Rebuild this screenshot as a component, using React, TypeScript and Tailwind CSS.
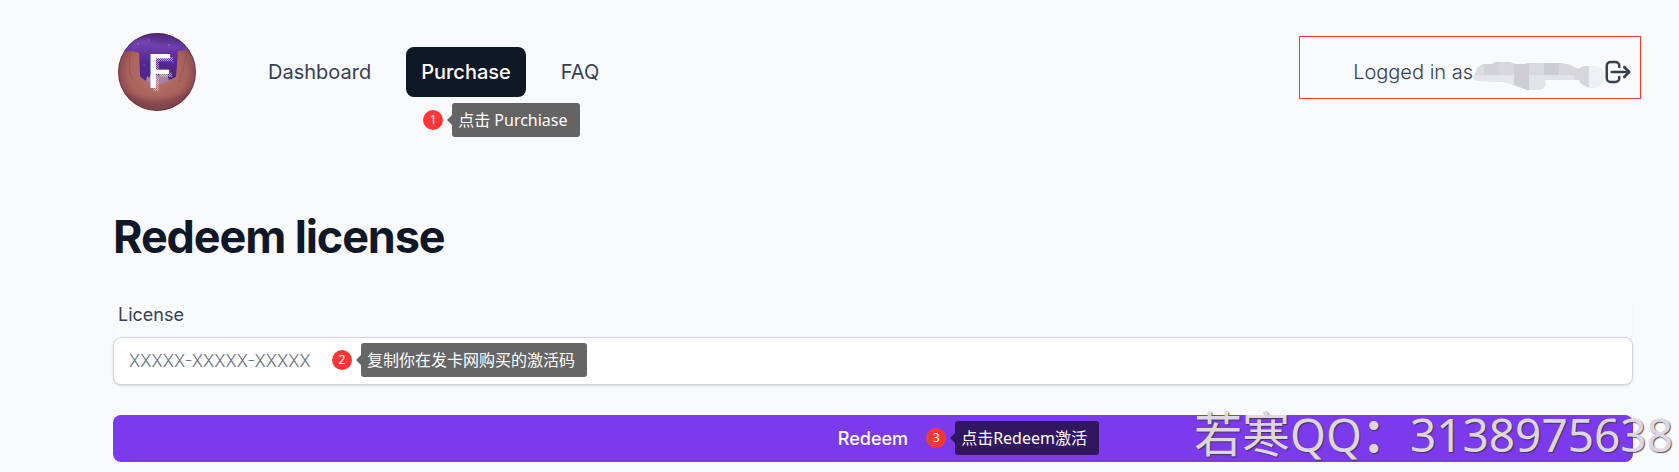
import React from "react";

const CJK = "font-['Noto_Sans','Noto_Sans_CJK_SC',sans-serif]";

function Note({ step, text, className }: { step: number; text: string; className: string }) {
  return (
    <span className={`pointer-events-none absolute flex items-center font-normal ${className}`}>
      <span className="flex size-5 items-center justify-center rounded-full bg-[#ff3636] font-['Noto_Sans',sans-serif] text-xs text-white">
        {step}
      </span>
      <span className="ml-1 h-0 w-0 border-y-[5px] border-r-[5px] border-y-transparent border-r-black/60" />
      <span className={`h-[34px] whitespace-nowrap rounded-[3px] bg-black/60 pl-1.5 pr-3 text-base leading-[34px] text-white ${CJK}`}>
        {text}
      </span>
    </span>
  );
}

function Logo() {
  return (
    <svg viewBox="0 0 78 78" className="size-[78px]" role="img" aria-label="Logo">
      <defs>
        <clipPath id="disc">
          <circle cx="39" cy="39" r="39" />
        </clipPath>
        <radialGradient id="skin" cx="0.5" cy="0.5" r="0.58">
          <stop offset="0" stopColor="#b97868" />
          <stop offset="0.65" stopColor="#a8625d" />
          <stop offset="0.85" stopColor="#8c4b50" />
          <stop offset="1" stopColor="#4f2832" />
        </radialGradient>
        <linearGradient id="sky" x1="0" y1="0" x2="0" y2="1">
          <stop offset="0" stopColor="#4f2a80" />
          <stop offset="0.3" stopColor="#6b3aa8" />
          <stop offset="0.6" stopColor="#54288f" />
          <stop offset="1" stopColor="#4a2484" />
        </linearGradient>
        <filter id="haze" x="-20%" y="-20%" width="140%" height="140%">
          <feGaussianBlur stdDeviation="2" />
        </filter>
        <pattern id="dots" width="2" height="2" patternUnits="userSpaceOnUse">
          <rect width="1" height="1" fill="#d6c9e0" fillOpacity="0.8" />
          <rect x="1" y="1" width="1" height="1" fill="#d6c9e0" fillOpacity="0.8" />
        </pattern>
      </defs>
      <g clipPath="url(#disc)">
        <rect width="78" height="78" fill="url(#skin)" />
        <path d="M0 58Q38 76 78 56V78H0Z" fill="#6b3540" opacity="0.45" filter="url(#haze)" />
        <path d="M0 0H78V20L68 17L60 18L59 32L58 44Q50 48 42 50L33 50Q26 48 22 43L21 20L15 18L0 19Z" fill="url(#sky)" />
        <path d="M14 9Q26 3 36 9T64 12Q54 18 42 14T14 14Z" fill="#8a54c2" opacity="0.6" filter="url(#haze)" />
        <path d="M28 48L29 43L31 45L33 41L35 45L39 42L41 44L43 38L45 36L46 41L49 40L51 48L43 51L34 51Z" fill="#a7849b" />
        <path d="M13 20Q9 34 14 46M68 22Q66 36 61 49" fill="none" stroke="#773f46" strokeWidth="1" opacity="0.4" />
        <g fill="#aa8cd5">
          <circle cx="20" cy="11" r="0.7" />
          <circle cx="27" cy="18" r="0.6" />
          <circle cx="31" cy="7" r="0.6" />
          <circle cx="51" cy="12" r="0.7" />
          <circle cx="55" cy="29" r="0.6" />
          <circle cx="26" cy="32" r="0.6" />
        </g>
        <g fontFamily="'Noto Sans',sans-serif" fontWeight="500" fontSize="48">
          <text x="31" y="58" fill="url(#dots)">F</text>
          <text x="28" y="55" fill="#ffffff">F</text>
        </g>
        <circle cx="39" cy="39" r="38.5" fill="none" stroke="#3c2036" strokeWidth="1" opacity="0.4" />
      </g>
    </svg>
  );
}

function HiddenName() {
  return (
    <svg viewBox="0 -6 132 36" className="h-9 w-[132px]" aria-hidden="true">
      <defs>
        <clipPath id="smudge">
          <path d="M0 16Q3 14 4 8L10 4H19L22 2H36L43 4H52L55 3H88L97 5L105 9L111 6H122L130 9L131 18Q128 28 118 28Q108 26 106 20L98 20H72L73 25Q71 30 64 30H54L41 25L30 22L5 21Q0 20 0 16Z" />
        </clipPath>
      </defs>
      <g clipPath="url(#smudge)" shapeRendering="crispEdges">
        <rect width="132" height="30" fill="#e2e3e7" />
        <rect width="11" height="15" fill="#dcdde1" />
        <rect x="11" width="15" height="15" fill="#d2d2d7" />
        <rect x="26" width="15" height="15" fill="#d7d7dc" />
        <rect x="41" width="15" height="30" fill="#cecdd4" />
        <rect x="56" width="15" height="15" fill="#d9dade" />
        <rect x="71" width="15" height="15" fill="#cccdd1" />
        <rect x="86" width="15" height="15" fill="#d7d7dc" />
        <rect y="15" width="41" height="15" fill="#e5e6ea" />
        <rect x="56" y="15" width="15" height="15" fill="#e0e4e7" />
        <rect x="101" width="15" height="30" fill="#d6d6db" />
        <rect x="116" width="16" height="30" fill="#eef1f4" />
      </g>
    </svg>
  );
}

export default function App() {
  return (
    <div className="relative overflow-hidden bg-[#f9fafc] pb-[10px] pl-[113px] pr-[46px] font-['Inter',sans-serif] text-gray-700">
      <header className="flex items-center pl-[5px] pt-[33px]">
        <a href="#home" className="shrink-0">
          <Logo />
        </a>
        <nav className="ml-[57px] flex gap-5 text-xl leading-[30px]">
          <a href="#dashboard" className="rounded-lg px-[15px] py-[10px]">Dashboard</a>
          <div className="relative">
            <a href="#purchase" className="block rounded-lg bg-gray-900 px-[15px] py-[10px] font-medium text-white">Purchase</a>
            <Note step={1} text="点击 Purchiase" className="left-[17px] top-14" />
          </div>
          <a href="#faq" className="rounded-lg px-[15px] py-[10px]">FAQ</a>
        </nav>
        <div className="relative ml-auto flex items-center text-xl font-light">
          <span>Logged in as</span>
          <HiddenName />
          <button type="button" aria-label="Log out" className="-ml-0.5">
            <svg viewBox="0 0 24 24" className="size-[30px]" fill="none" stroke="#374151" strokeWidth="2" strokeLinecap="round" strokeLinejoin="round">
              <path d="M17 16l4-4m0 0l-4-4m4 4H7m6 4v1a3 3 0 01-3 3H6a3 3 0 01-3-3V7a3 3 0 013-3h4a3 3 0 013 3v1" />
            </svg>
          </button>
          <span className="pointer-events-none absolute -bottom-[9px] -left-[54px] -right-2 -top-[18px] border border-[#ff3636]" />
        </div>
      </header>

      <main className="pt-[97px]">
        <h1 className="text-[45px] font-bold leading-[58px] tracking-tight text-gray-900">Redeem license</h1>
        <form className="mt-[34px]" onSubmit={(e) => e.preventDefault()}>
          <div className="rounded-t-lg border border-b-0 border-[#f6f7f9]">
            <label htmlFor="license" className="block px-1 pb-2 text-lg leading-7">License</label>
          </div>
          <div className="relative">
            <input
              id="license"
              type="text"
              placeholder="XXXXX-XXXXX-XXXXX"
              className="block h-12 w-full rounded-lg border border-gray-300 bg-white px-[15px] text-[17px] shadow-sm placeholder:font-light placeholder:text-gray-500"
            />
            <Note step={2} text="复制你在发卡网购买的激活码" className="left-[219px] top-1.5" />
          </div>
          <button type="submit" className="mt-[30px] flex h-[47px] w-full items-center justify-center rounded-lg bg-[#7c3aed] text-lg font-medium text-white">
            <span className="relative">
              Redeem
              <Note step={3} text="点击Redeem激活" className="-top-1 left-full ml-[18px]" />
            </span>
          </button>
        </form>
      </main>

      <div className={`pointer-events-none absolute bottom-[3px] right-1.5 flex items-center whitespace-nowrap text-5xl leading-[70px] text-[#dcd7e3] [text-shadow:1px_1px_1px_rgba(50,50,50,0.8)] ${CJK}`}>
        <span>若寒</span>
        <span className="text-[46px]">QQ</span>
        <span className="font-bold">：</span>
        <span className="text-[46px]">3138975638</span>
      </div>
    </div>
  );
}
